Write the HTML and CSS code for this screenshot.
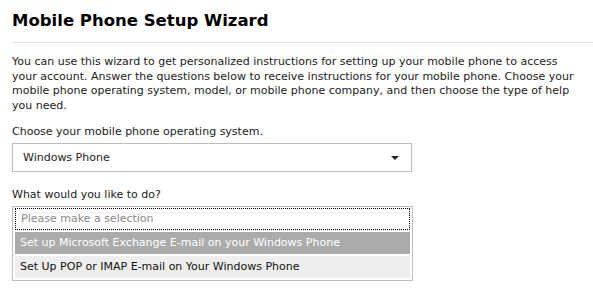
FILE: index.html
```html
<!DOCTYPE html>
<html lang="en">
<head>
    <meta charset="UTF-8">
    <title>Mobile Phone Setup Wizard</title>
    <link rel="stylesheet" href="styles.css">
</head>
<body>

<div class="wizard">
    <h1 class="wizard-title">Mobile Phone Setup Wizard</h1>

    <p class="wizard-intro">
        You can use this wizard to get personalized instructions for setting up your mobile phone to access
        your account. Answer the questions below to receive instructions for your mobile phone. Choose your
        mobile phone operating system, model, or mobile phone company, and then choose the type of help
        you need.
    </p>

    <div class="field">
        <div class="field-label">Choose your mobile phone operating system.</div>
        <div class="dropdown">
            <span>Windows Phone</span>
            <span class="dropdown-arrow"></span>
        </div>
    </div>

    <div class="field field-list">
        <div class="field-label">What would you like to do?</div>
        <div class="listbox">
            <div class="option option-placeholder">Please make a selection</div>
            <div class="option option-selected">Set up Microsoft Exchange E-mail on your Windows Phone</div>
            <div class="option option-alt">Set Up POP or IMAP E-mail on Your Windows Phone</div>
        </div>
    </div>
</div>

</body>
</html>
```

FILE: styles.css
```css
body {
    margin: 0;
    padding: 0;
    background-color: #fff;
    color: #000;
    font-family: "DejaVu Sans", Verdana, sans-serif;
    font-size: 11px;
}
.wizard {
    padding: 10px 0 0 12px;
}
.wizard-title {
    margin: 0;
    padding-bottom: 10px;
    border-bottom: 1px solid #e4e4e4;
    font-size: 16.5px;
    font-weight: bold;
    line-height: 22px;
}
.wizard-intro {
    margin: 12px 0 0 0;
    width: 570px;
    line-height: 14.5px;
    color: #222;
}
.field {
    margin-top: 12px;
}
.field-list {
    margin-top: 16px;
}
.field-label {
    color: #222;
    line-height: 14px;
}
.dropdown {
    display: flex;
    align-items: center;
    justify-content: space-between;
    box-sizing: border-box;
    width: 400px;
    height: 29px;
    margin-top: 4px;
    padding: 0 10px;
    border: 1px solid #bdbdbd;
    color: #222;
}
.dropdown-arrow {
    width: 0;
    height: 0;
    margin-right: 2px;
    border-left: 4px solid transparent;
    border-right: 4px solid transparent;
    border-top: 4px solid #222;
}
.listbox {
    box-sizing: border-box;
    width: 401px;
    margin-top: 4px;
    padding: 1px 2px 2px 2px;
    border: 1px solid #bdbdbd;
}
.option {
    box-sizing: border-box;
    height: 22px;
    line-height: 20px;
    padding: 0 5px;
    margin-bottom: 2px;
    color: #111;
}
.option:last-child {
    margin-bottom: 0;
}
.option-placeholder {
    border: 1px dotted #000;
    color: #8a8a8a;
}
.option-selected {
    background-color: #ababab;
    color: #fff;
    line-height: 22px;
}
.option-alt {
    background-color: #eeeeee;
    line-height: 22px;
}
```
